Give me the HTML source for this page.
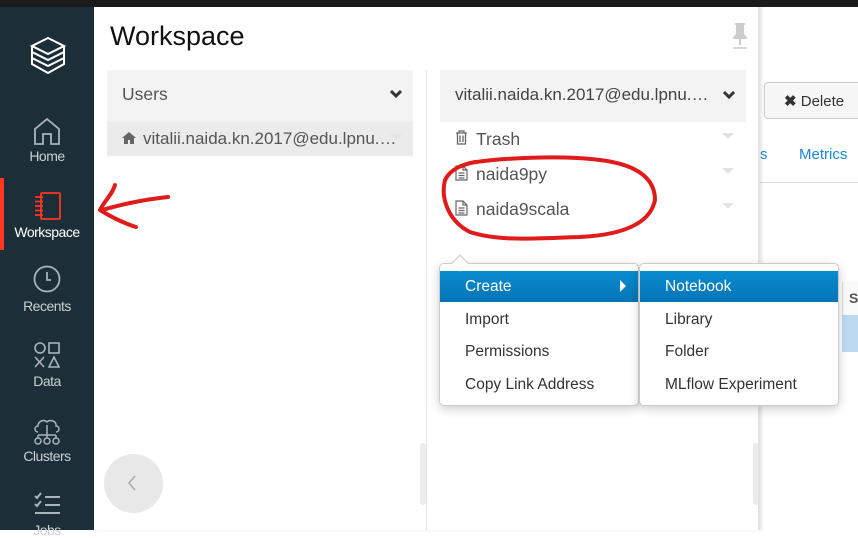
<!DOCTYPE html>
<html><head><meta charset="utf-8"><style>
*{margin:0;padding:0;box-sizing:border-box}
body{width:858px;height:530px;overflow:hidden;background:#fff;font-family:"Liberation Sans",sans-serif;position:relative}
.a{position:absolute}
.sb{left:0;top:7px;width:94px;height:523px;background:#1c2e37}
.nav{position:absolute;left:0;width:94px;text-align:center;color:#c9d0d4;font-size:14px;letter-spacing:-0.5px}
.t{color:#555;font-size:17px;position:absolute;white-space:nowrap}
.mi{position:absolute;left:25px;font-size:15.5px;color:#333}
.tri{position:absolute;width:0;height:0;border-left:6px solid transparent;border-right:6px solid transparent;border-top:6px solid #e3e3e3}
</style></head><body>
<div class="a" style="left:0;top:0;width:858px;height:7px;background:#1b1b1b"></div>
<div class="a sb"></div>
<svg class="a" style="left:29px;top:36px" width="38" height="40" viewBox="0 0 38 40" fill="none" stroke="#fff" stroke-width="2"><path d="M19 2L35 10L19 18L3 10Z"/><path d="M3 16L19 24L35 16"/><path d="M3 22L19 30L35 22"/><path d="M3 10V28L19 37L35 28V10"/></svg>
<svg class="a" style="left:33px;top:117px" width="28" height="29" viewBox="0 0 28 29" fill="none" stroke="#a9b4ba" stroke-width="1.8"><path d="M2 12L14 2L26 12V27H18V17H10V27H2Z"/></svg>
<div class="nav" style="top:148px">Home</div>
<div class="a" style="left:0;top:178px;width:4px;height:72px;background:#ff3621"></div>
<svg class="a" style="left:33px;top:191px" width="29" height="30" viewBox="0 0 29 30" fill="none" stroke="#ff3621" stroke-width="1.8"><rect x="8" y="2" width="19" height="26" rx="1"/><path d="M2 6H10M2 10.5H10M2 15H10M2 19.5H10M2 24H10"/></svg>
<div class="nav" style="top:224px;color:#fff">Workspace</div>
<svg class="a" style="left:33px;top:265px" width="28" height="28" viewBox="0 0 28 28" fill="none" stroke="#a9b4ba" stroke-width="1.8"><circle cx="14" cy="14" r="12.5"/><path d="M14 7V15H18"/></svg>
<div class="nav" style="top:298px">Recents</div>
<svg class="a" style="left:33px;top:340px" width="28" height="30" viewBox="0 0 28 30" fill="none" stroke="#a9b4ba" stroke-width="1.6"><circle cx="7" cy="8" r="5"/><rect x="16" y="3" width="10" height="10"/><path d="M2 17L11 27M11 17L2 27M21 17L16 27H26Z"/></svg>
<div class="nav" style="top:373px">Data</div>
<svg class="a" style="left:32px;top:418px" width="30" height="28" viewBox="0 0 30 28" fill="none" stroke="#a9b4ba" stroke-width="1.5"><path d="M6 14C2 14 2 8 6 8C6 3 12 1 15 4C18 1 25 3 24 8C28 8 28 14 24 14"/><path d="M15 7V17M6 17H24M6 17V20M24 17V20M15 17V20"/><circle cx="6" cy="23" r="3"/><circle cx="15" cy="23" r="3"/><circle cx="24" cy="23" r="3"/></svg>
<div class="nav" style="top:448px">Clusters</div>
<svg class="a" style="left:33px;top:492px" width="28" height="26" viewBox="0 0 28 26" fill="none" stroke="#a9b4ba" stroke-width="2"><path d="M2 4L4 6L8 1M2 12L4 14L8 9M12 5H27M12 13H27M2 21H27"/></svg>
<div class="nav" style="top:522px">Jobs</div>

<div class="a" style="left:764px;top:82px;width:100px;height:37px;border:1px solid #ccc;border-radius:4px;background:#f7f7f7"></div>
<div class="a" style="left:784px;top:92px;font-size:15px;color:#333"><b>✖</b> Delete</div>
<div class="a" style="left:760px;top:146px;font-size:15px;color:#1a8ad6">s</div>
<div class="a" style="left:799px;top:146px;font-size:15px;color:#1a8ad6">Metrics</div>
<div class="a" style="left:760px;top:182px;width:98px;height:1px;background:#ddd"></div>
<div class="a" style="left:842px;top:282px;width:16px;height:33px;border-left:1px solid #ddd;background:#fafafa"></div>
<div class="a" style="left:849px;top:290px;font-size:14px;color:#555;font-weight:bold">S</div>
<div class="a" style="left:842px;top:315px;width:16px;height:37px;background:#bcd9f0"></div>

<div class="a" style="left:94px;top:7px;width:666px;height:523px;background:#fff;border-right:2px solid #e3e3e3;box-shadow:2px 0 3px rgba(0,0,0,.1)"></div>
<div class="a" style="left:110px;top:21px;font-size:27px;color:#111">Workspace</div>
<svg class="a" style="left:733px;top:22px" width="14" height="28" viewBox="0 0 14 28"><path d="M2 2H12M4 2V12L1 16H13L10 12V2M7 16V23" stroke="#ccc" stroke-width="2" fill="#ccc"/><path d="M0 26H14" stroke="#ccc" stroke-width="1.5"/></svg>
<div class="a" style="left:426px;top:70px;width:1px;height:460px;background:#e6e6e6"></div>
<div class="a" style="left:107px;top:70px;width:306px;height:52px;background:#f3f3f3"></div>
<div class="t" style="left:122px;top:84px;font-size:17.5px">Users</div>
<svg class="a" style="left:389px;top:89px" width="14" height="10" viewBox="0 0 14 10"><path d="M2 2L7 7L12 2" stroke="#333" stroke-width="3" fill="none"/></svg>
<div class="a" style="left:107px;top:122px;width:306px;height:34px;background:#ebebeb"></div>
<svg class="a" style="left:121px;top:131px" width="16" height="14" viewBox="0 0 16 14"><path d="M8 1L1 7H3V13H7V9H9V13H13V7H15Z" fill="#666"/></svg>
<div class="t" style="left:143px;top:129px">vitalii.naida.kn.2017@edu.lpnu.…</div>
<div class="tri" style="left:390px;top:134px"></div>

<div class="a" style="left:440px;top:70px;width:306px;height:52px;background:#f3f3f3"></div>
<div class="t" style="left:455px;top:85px;color:#444">vitalii.naida.kn.2017@edu.lpnu.…</div>
<svg class="a" style="left:722px;top:90px" width="14" height="10" viewBox="0 0 14 10"><path d="M2 2L7 7L12 2" stroke="#333" stroke-width="3" fill="none"/></svg>
<svg class="a" style="left:455px;top:130px" width="13" height="15" viewBox="0 0 13 15" fill="none" stroke="#666" stroke-width="1.3"><path d="M1 3H12M4 3V1H9V3M2.5 3V14H10.5V3M5 5.5V12M8 5.5V12"/></svg>
<div class="t" style="left:476px;top:129px;font-size:17.5px">Trash</div>
<div class="tri" style="left:722px;top:133px"></div>
<svg class="a" style="left:455px;top:165px" width="13" height="16" viewBox="0 0 13 16" fill="none" stroke="#666" stroke-width="1.2"><path d="M1 1H8L12 5V15H1Z M8 1V5H12 M3.5 8H9.5M3.5 10.5H9.5M3.5 13H9.5"/></svg>
<div class="t" style="left:476px;top:164px;font-size:17.5px">naida9py</div>
<div class="tri" style="left:722px;top:168px"></div>
<svg class="a" style="left:455px;top:200px" width="13" height="16" viewBox="0 0 13 16" fill="none" stroke="#666" stroke-width="1.2"><path d="M1 1H8L12 5V15H1Z M8 1V5H12 M3.5 8H9.5M3.5 10.5H9.5M3.5 13H9.5"/></svg>
<div class="t" style="left:476px;top:199px;font-size:17.5px">naida9scala</div>
<div class="tri" style="left:722px;top:203px"></div>

<div class="a" style="left:420px;top:443px;width:6px;height:62px;background:#ececec;border-radius:3px"></div>
<div class="a" style="left:753px;top:443px;width:5px;height:62px;background:#ececec;border-radius:3px"></div>
<div class="a" style="left:104px;top:454px;width:59px;height:59px;border-radius:50%;background:#e8e8e8"></div>
<svg class="a" style="left:127px;top:474px" width="10" height="18" viewBox="0 0 10 18"><path d="M8 2L2 9L8 16" stroke="#aaa" stroke-width="1.5" fill="none"/></svg>

<div class="a" style="left:439px;top:263px;width:200px;height:143px;background:#fff;border:1px solid #ccc;border-radius:5px;box-shadow:0 3px 10px rgba(0,0,0,.2)">
 <div class="a" style="left:0;top:7px;width:198px;height:31px;background:linear-gradient(#0a8cd0,#0474b4)"></div>
 <div class="mi" style="top:14px;color:#fff">Create</div>
 <div class="a" style="left:180px;top:16px;width:0;height:0;border-top:6px solid transparent;border-bottom:6px solid transparent;border-left:6px solid #fff"></div>
 <div class="mi" style="top:47px">Import</div>
 <div class="mi" style="top:79px">Permissions</div>
 <div class="mi" style="top:112px">Copy Link Address</div>
</div>
<div class="a" style="left:454px;top:257px;width:12px;height:12px;background:#fff;border-left:1px solid #ccc;border-top:1px solid #ccc;transform:rotate(45deg)"></div>
<div class="a" style="left:639px;top:263px;width:200px;height:143px;background:#fff;border:1px solid #ccc;border-radius:5px;box-shadow:0 3px 10px rgba(0,0,0,.2)">
 <div class="a" style="left:0;top:7px;width:198px;height:31px;background:linear-gradient(#0a8cd0,#0474b4)"></div>
 <div class="mi" style="top:14px;color:#fff">Notebook</div>
 <div class="mi" style="top:47px">Library</div>
 <div class="mi" style="top:79px">Folder</div>
 <div class="mi" style="top:112px">MLflow Experiment</div>
</div>

<svg class="a" style="left:0;top:0" width="858" height="530" fill="none" stroke="#e01b1b" stroke-width="4" stroke-linecap="round" stroke-linejoin="round">
<path d="M115 185C112 195 105 200 100 210C108 215 120 222 136 227"/>
<path d="M102 210C120 205 140 200 168 197"/>
<path d="M470 163C500 158 560 155 600 160C640 165 655 180 655 200C650 225 620 235 580 237C540 238 500 242 470 232C450 222 440 200 445 180C450 170 460 165 475 162"/>
</svg>
</body></html>
